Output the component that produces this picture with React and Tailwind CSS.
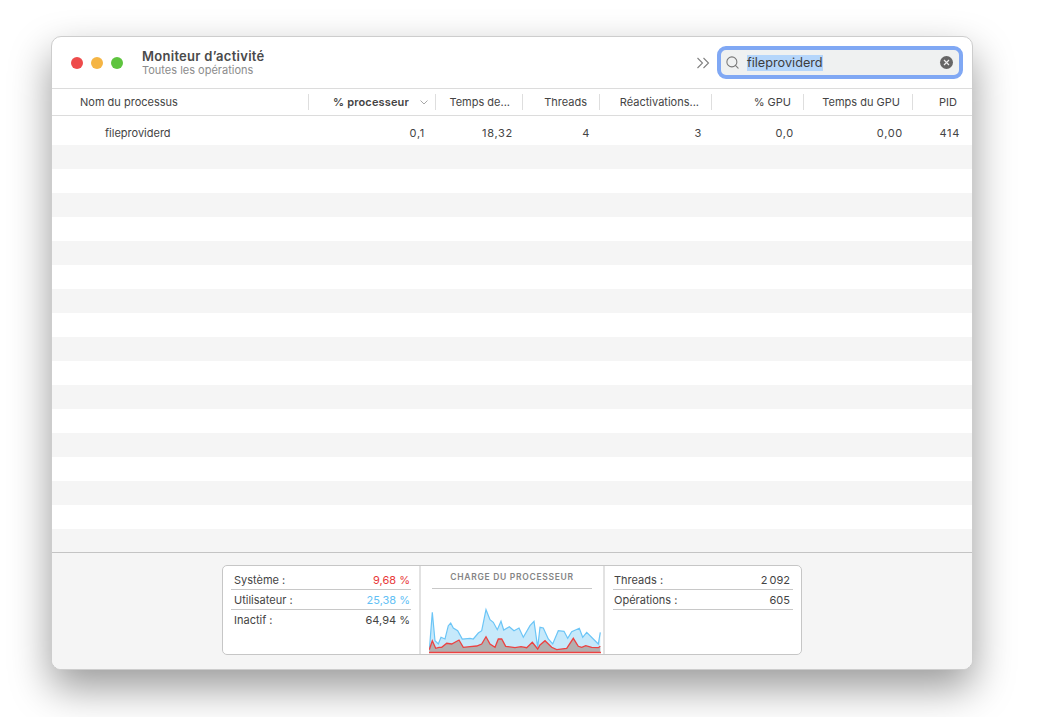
import { Search } from 'lucide-react';

const gridCols = 'grid grid-cols-[257px_127px_87px_77px_112px_92px_109px_1fr]';

const colonnes = [
    { label: 'Nom du processus', className: 'justify-start pl-[28px]' },
    { label: '% processeur', className: 'justify-end pr-[26px] font-semibold tracking-[0.15px]' },
    { label: 'Temps de...' },
    { label: 'Threads' },
    { label: 'Réactivations...' },
    { label: '% GPU' },
    { label: 'Temps du GPU' },
    { label: 'PID', className: 'justify-end pr-[15px]', last: true },
];

const valeurs = ['0,1', '18,32', '4', '3', '0,0', '0,00', '414'];

const bleu = [
    [0.3, 46.7], [3.3, 8.3], [6, 36.7], [9.3, 40], [12, 33.3], [16, 35], [19.3, 21.7], [21.7, 19], [24.3, 24],
    [28.7, 26.7], [33.3, 35], [41, 34.3], [44.3, 35], [49.3, 29], [52.7, 26.7], [57, 5.7], [61, 15.7], [64.3, 18.3],
    [68.3, 25.7], [72, 17.3], [74.7, 26], [80.3, 22.7], [85, 26.7], [90, 24], [94.3, 33.3], [101, 21.7], [105, 17.3],
    [108.7, 43.3], [111, 23.3], [114.3, 24], [119.3, 35], [123.7, 40], [129.3, 26.7], [135, 27.3], [138.7, 34.3],
    [142.7, 27.7], [150.3, 24.3], [153.7, 33.3], [157.7, 28.3], [164.3, 35], [169.3, 40], [171.3, 28.3],
];

const rouge = [
    [0.3, 45.7], [3.3, 36.7], [6.7, 44.3], [10, 43.3], [12.7, 43.3], [17.7, 39.3], [22.7, 40], [30, 36], [34.3, 43.3],
    [41, 42.7], [47.7, 42], [52.7, 40], [57, 32.7], [61, 40], [66, 43.3], [69.3, 35], [72.7, 35], [76.7, 42.3],
    [86, 43.7], [92, 42.7], [97.7, 43.7], [103.3, 38.3], [108.7, 45], [111, 41], [116, 36.7], [122.7, 43.3],
    [127.7, 45.7], [137.7, 44.3], [144.3, 34.3], [149.3, 42.3], [152.7, 43.3], [156.7, 41.7], [162.7, 43.3],
    [169.3, 43.7], [171.3, 42.3],
];

const ligne = (pts) => pts.map((p) => p.join(',')).join(' ');
const aire = (pts) => `0.3,49 ${ligne(pts)} 171.3,49`;

const Graphique = () => (
    <svg width="172" height="50" viewBox="0 0 172 50" className="block">
        <polygon points={aire(bleu)} fill="#c6e9fb" />
        <polyline points={ligne(bleu)} fill="none" stroke="#6cc5f6" strokeWidth="1.2" />
        <polygon points={aire(rouge)} fill="#b3afaf" />
        <polyline points={ligne(rouge)} fill="none" stroke="#ec4242" strokeWidth="1.3" />
        <line x1="0" y1="48.5" x2="172" y2="48.5" stroke="#ec4242" strokeWidth="1.4" />
    </svg>
);

const Stat = ({ label, value, color = 'text-[#444]', border = true, className }) => (
    <div className={`h-5 flex items-center justify-between ${className} ${border ? 'pt-px border-b border-[#c8c8c8]' : ''}`}>
        <span>{label}</span>
        <span className={color}>{value}</span>
    </div>
);

const App = () => {
    return (
        <div className="h-screen overflow-hidden bg-white pt-[36px] pl-[51px] font-['Inter','Liberation_Sans',sans-serif] text-[11px] text-[#444]">
            <div className="w-[922px] h-[634px] flex flex-col rounded-[10px] overflow-hidden bg-white border border-[#cdcdcd] shadow-[0_18px_40px_rgba(0,0,0,0.4)]">
                {/* Barre de titre */}
                <div className="h-[52px] shrink-0 flex items-center pl-[19px] pr-[9px] border-b border-[#dcdcdc]">
                    <div className="flex gap-2">
                        <span className="w-3 h-3 rounded-full bg-[#ee4b4b]"></span>
                        <span className="w-3 h-3 rounded-full bg-[#f5b544]"></span>
                        <span className="w-3 h-3 rounded-full bg-[#5ec43e]"></span>
                    </div>
                    <div className="ml-[19px] -mt-[1px]">
                        <div className="text-[13px] leading-4 font-semibold tracking-[0.28px] text-[#4a4a4a]">Moniteur d’activité</div>
                        <div className="text-[11px] leading-[13px] text-[#8c8c8c]">Toutes les opérations</div>
                    </div>
                    <svg width="14" height="12" viewBox="0 0 14 12" fill="none" stroke="#808080" strokeWidth="1.1" className="ml-auto mr-[7px]">
                        <path d="M1.5 1 L6.5 6 L1.5 11" />
                        <path d="M7.5 1 L12.5 6 L7.5 11" />
                    </svg>
                    <div className="w-[246px] h-[33px] flex items-center rounded-[9px] bg-[#eff1f1] border-[4px] border-[#80a8f4] pl-[4px] pr-[6px]">
                        <Search size={15} strokeWidth={1.7} className="text-[#777]" />
                        <span className="ml-[7px] text-[12.7px] leading-[16px] text-[#3d3d3d] bg-[#b5d6fb]">fileproviderd</span>
                        <span className="ml-auto w-[13px] h-[13px] rounded-full bg-[#666] flex items-center justify-center">
                            <svg width="7" height="7" viewBox="0 0 7 7" stroke="#eee" strokeWidth="1.2">
                                <path d="M1 1 L6 6 M6 1 L1 6" />
                            </svg>
                        </span>
                    </div>
                </div>

                {/* En-têtes */}
                <div className={`${gridCols} h-[27px] shrink-0 border-b border-[#dcdcdc] items-center`}>
                    {colonnes.map((c) => (
                        <div
                            key={c.label}
                            className={`relative h-4 flex items-center ${c.className || 'justify-end pr-3'} ${c.last ? '' : 'border-r border-[#dedede]'}`}
                        >
                            {c.label}
                            {c.label === '% processeur' && (
                                <svg width="8" height="5" viewBox="0 0 8 5" fill="none" stroke="#a8a8a8" className="absolute right-[7px] top-[6px]">
                                    <path d="M0.5 0.5 L4 4 L7.5 0.5" />
                                </svg>
                            )}
                        </div>
                    ))}
                </div>

                {/* Liste des processus */}
                <div className="flex-1 min-h-0 overflow-hidden">
                    <div className={`${gridCols} h-[29px] pt-[6px] items-center`}>
                        <div className="pl-[53px]">fileproviderd</div>
                        {valeurs.map((v, i) => (
                            <div key={i} className={`text-right tracking-[0.7px] ${i === 0 ? 'pr-[11px]' : i === 6 ? 'pr-[12px]' : 'pr-[10px]'}`}>{v}</div>
                        ))}
                    </div>
                    {Array.from({ length: 17 }).map((_, i) => (
                        <div key={i} className={`h-6 ${i % 2 === 0 ? 'bg-[#f5f5f5]' : 'bg-white'}`}></div>
                    ))}
                </div>

                {/* Charge */}
                <div className="h-[117px] shrink-0 bg-[#f5f5f5] border-t border-[#c4c4c4] flex justify-center pt-3">
                    <div className="w-[580px] h-[90px] flex bg-white rounded-[5px] border border-[#c6c6c6] overflow-hidden">
                        <div className="w-[198px] shrink-0 px-[8px] pt-[4px] border-r-2 border-[#e2e2e2]">
                            <Stat label="Système :" value="9,68 %" color="text-[#e8393a]" className="pl-[3px] pr-px" />
                            <Stat label="Utilisateur :" value="25,38 %" color="text-[#63bff5]" className="pl-[3px] pr-px" />
                            <Stat label="Inactif :" value="64,94 %" border={false} className="pl-[3px] pr-px" />
                        </div>
                        <div className="w-[184px] shrink-0 flex flex-col border-r-2 border-[#e2e2e2] pl-[8px]">
                            <div className="mx-[3px] w-[160px] h-[23px] text-[8.5px] font-semibold tracking-[0.7px] text-[#858585] text-center leading-[22px] border-b border-[#c8c8c8]">
                                CHARGE DU PROCESSEUR
                            </div>
                            <div className="mt-auto">
                                <Graphique />
                            </div>
                        </div>
                        <div className="flex-1 pl-[8px] pr-[8px] pt-[4px]">
                            <Stat label="Threads :" value={'2\u202f092'} className="pl-px pr-[3px]" />
                            <Stat label="Opérations :" value="605" className="pl-px pr-[3px]" />
                        </div>
                    </div>
                </div>
            </div>
        </div>
    );
};

export default App;
